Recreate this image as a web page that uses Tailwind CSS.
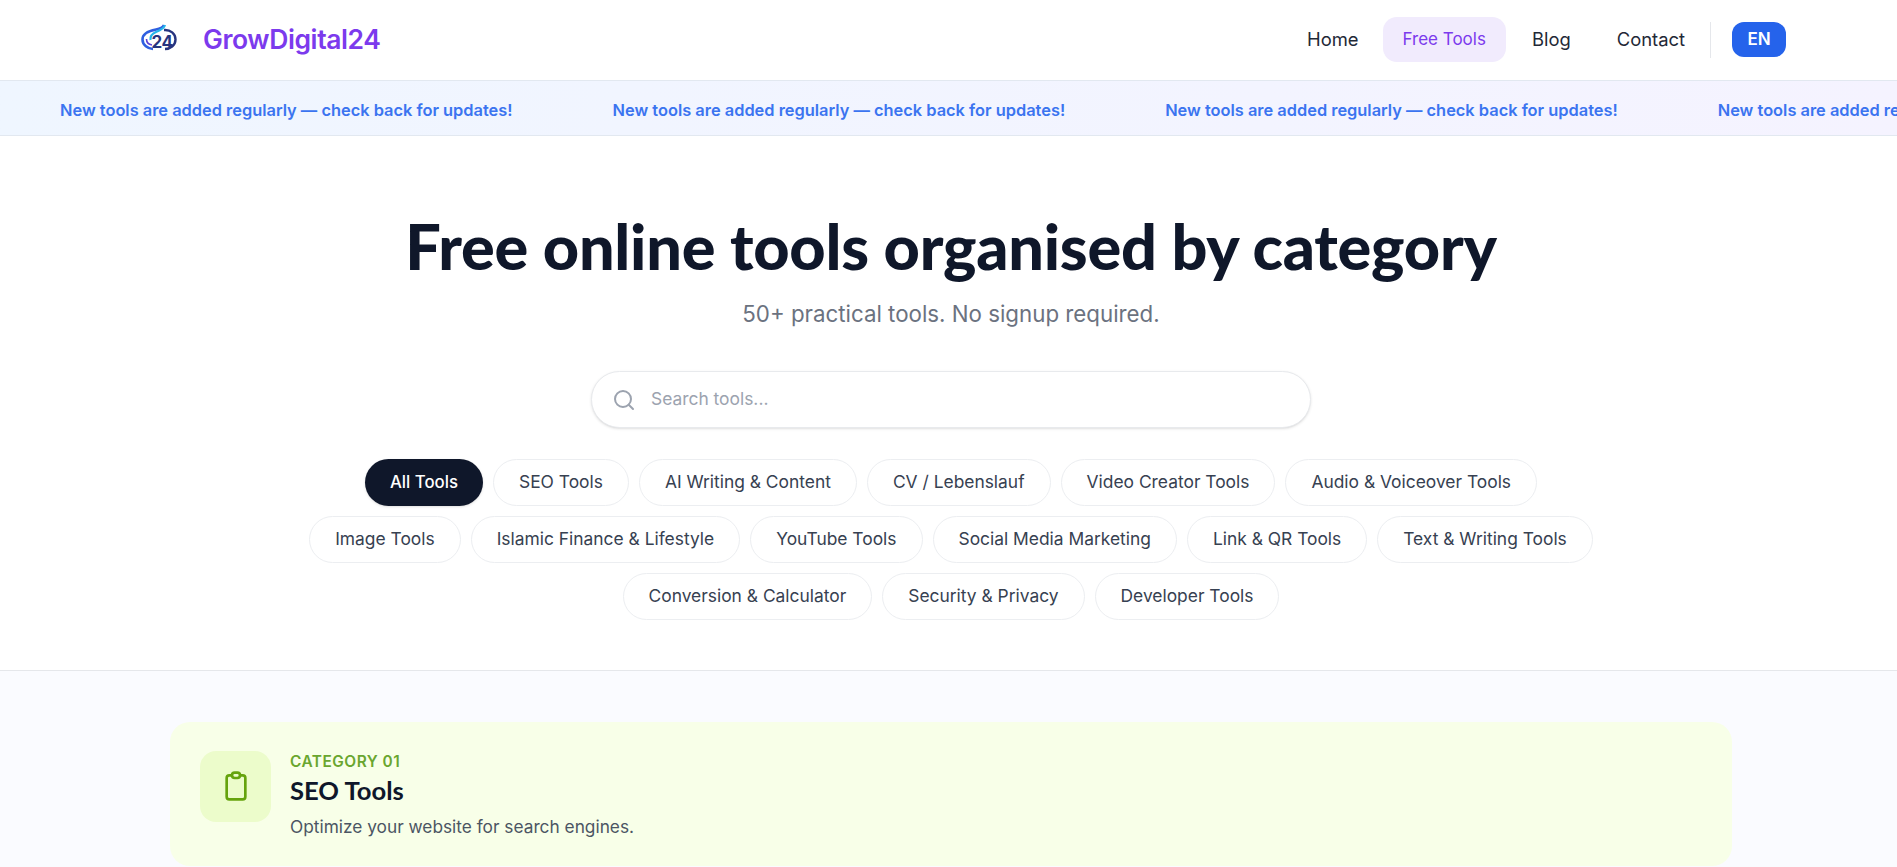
<!DOCTYPE html>
<html lang="en">
  <head>
    <meta charset="UTF-8" />
    <meta name="viewport" content="width=device-width, initial-scale=1.0" />
    <title>GrowDigital24 - Free Tools</title>
    <script src="https://cdn.jsdelivr.net/npm/@tailwindcss/browser@4"></script>
  </head>
  <body class="h-[867px] overflow-hidden bg-white font-['Inter',sans-serif] text-[#0f172a]">
    <!-- Header -->
    <header class="h-[80px] flex items-center justify-between pl-[141px] pr-[111px] bg-white">
      <a class="flex items-center gap-[26px]">
        <svg class="w-[36px] h-[28px] mb-[4px]" viewBox="0 0 36 28" fill="none">
          <path d="M23 1c-1 3-4 4-8 4.500C7 7 1.500 10 1.500 15.500S7 25 12 25" stroke="#2f5fe0" stroke-width="2.600" />
          <path d="M24 1c-1 4-5 5.500-9 7-3.500 1.500-6 4-5.500 8" stroke="#25b6ea" stroke-width="2.200" />
          <path d="M5.500 15c0 3 2 5.500 5.500 6" stroke="#5b3fd6" stroke-width="1.600" />
          <path d="M23 6c6.500-.5 11.500 3.500 11.500 9.500S29 25 24 25" stroke="#27347f" stroke-width="2.400" />
          <text x="10.500" y="24" font-size="17" font-weight="700" letter-spacing="-0.5" fill="#27347f" font-family="Inter, sans-serif">24</text>
        </svg>
        <span class="text-[26.500px] font-semibold tracking-[-0.4px] text-[#7c3aed]">GrowDigital24</span>
      </a>
      <nav class="flex items-center text-[18.400px] text-[#1f2937]">
        <a>Home</a>
        <a class="ml-[24px] mb-[2px] pt-[2px] px-[20px] h-[45px] flex items-center rounded-[14px] bg-[#f1ebfd] text-[17px] text-[#7c3aed]">Free Tools</a>
        <a class="ml-[26px]">Blog</a>
        <a class="ml-[46px]">Contact</a>
        <div class="w-px h-[36px] bg-[#e5e7eb] ml-[25px] mr-[21px]"></div>
        <button class="w-[54px] h-[35px] mb-[2px] pt-[2px] rounded-[12px] bg-[#2563eb] text-white font-semibold text-[17px]">EN</button>
      </nav>
    </header>

    <!-- Announcement strip -->
    <div class="h-[56px] flex items-center overflow-hidden whitespace-nowrap border-y border-[#e2e8f0] bg-gradient-to-r from-[#eff6ff] to-[#f5f3ff] pl-[60px] pt-[4px] gap-[100px] text-[16.400px] font-semibold text-[#3b74f0]">
      <span>New tools are added regularly — check back for updates!</span>
      <span>New tools are added regularly — check back for updates!</span>
      <span>New tools are added regularly — check back for updates!</span>
      <span class="shrink-0">New tools are added regularly — check back for updates!</span>
    </div>

    <!-- Hero -->
    <section class="h-[535px] border-b border-[#e5e7eb] flex flex-col items-center pl-[5px] pt-[74px]">
      <h1 class="text-[63px] leading-[72px] font-black tracking-[-0.25px] font-['Lato',sans-serif] text-[#0f172a]">Free online tools organised by category</h1>
      <p class="mt-[16px] text-[22.300px] leading-[32px] text-[#6b7280]">50+ practical tools. No signup required.</p>
      <div class="mt-[41px] w-[720px] h-[57px] flex items-center gap-[15px] pl-[20px] pr-[21px] rounded-full border border-[#e8eaed] bg-white shadow-sm">
        <svg class="w-[24px] h-[24px] text-[#9ca3af]" viewBox="0 0 24 24" fill="none" stroke="currentColor" stroke-width="2" stroke-linecap="round"><circle cx="11" cy="11" r="8" /><path d="m21 21-4.300-4.300" /></svg>
        <span class="text-[17.400px] text-[#9ca3af]">Search tools...</span>
      </div>
      <div class="mt-[31px] w-[1300px] flex flex-wrap justify-center gap-[10px] text-[17.400px] text-[#374151]">
        <a class="h-[47px] px-[25px] flex items-center rounded-full bg-[#0f172a] text-[16.800px] text-white font-medium shadow-sm">All Tools</a>
        <a class="h-[47px] px-[25px] flex items-center rounded-full border border-[#eceef1] bg-white">SEO Tools</a>
        <a class="h-[47px] px-[25px] flex items-center rounded-full border border-[#eceef1] bg-white">AI Writing &amp; Content</a>
        <a class="h-[47px] px-[25px] flex items-center rounded-full border border-[#eceef1] bg-white">CV / Lebenslauf</a>
        <a class="h-[47px] px-[25px] flex items-center rounded-full border border-[#eceef1] bg-white">Video Creator Tools</a>
        <a class="h-[47px] px-[25px] flex items-center rounded-full border border-[#eceef1] bg-white">Audio &amp; Voiceover Tools</a>
        <a class="h-[47px] px-[25px] flex items-center rounded-full border border-[#eceef1] bg-white">Image Tools</a>
        <a class="h-[47px] px-[25px] flex items-center rounded-full border border-[#eceef1] bg-white">Islamic Finance &amp; Lifestyle</a>
        <a class="h-[47px] px-[25px] flex items-center rounded-full border border-[#eceef1] bg-white">YouTube Tools</a>
        <a class="h-[47px] px-[25px] flex items-center rounded-full border border-[#eceef1] bg-white">Social Media Marketing</a>
        <a class="h-[47px] px-[25px] flex items-center rounded-full border border-[#eceef1] bg-white">Link &amp; QR Tools</a>
        <a class="h-[47px] px-[25px] flex items-center rounded-full border border-[#eceef1] bg-white">Text &amp; Writing Tools</a>
        <a class="h-[47px] px-[25px] flex items-center rounded-full border border-[#eceef1] bg-white">Conversion &amp; Calculator</a>
        <a class="h-[47px] px-[25px] flex items-center rounded-full border border-[#eceef1] bg-white">Security &amp; Privacy</a>
        <a class="h-[47px] px-[25px] flex items-center rounded-full border border-[#eceef1] bg-white">Developer Tools</a>
      </div>
    </section>

    <!-- Categories -->
    <main class="h-[196px] bg-[#fafbff] pl-[170px] pr-[165px] pt-[51px]">
      <div class="h-[144px] rounded-[20px] bg-[#f8ffe8] flex gap-[19px] pl-[30px] pt-[29px]">
        <div class="w-[71px] h-[71px] rounded-[16px] bg-[#ecfccb] flex items-center justify-center">
          <svg class="w-[32px] h-[32px] mb-[2px] text-[#65a30d]" viewBox="0 0 24 24" fill="none" stroke="currentColor" stroke-width="2" stroke-linecap="round" stroke-linejoin="round"><rect x="5" y="4" width="14" height="18" rx="2" /><rect x="9" y="2" width="6" height="4" rx="2" fill="#ecfccb" /></svg>
        </div>
        <div class="pt-[1px]">
          <div class="text-[15.400px] leading-[20px] font-semibold tracking-[0.5px] text-[#6aa62f]">CATEGORY 01</div>
          <h2 class="mt-[2px] text-[25.600px] leading-[32px] font-bold font-['Lato',sans-serif] text-[#0f172a]">SEO Tools</h2>
          <p class="mt-[9px] text-[17.300px] leading-[24px] text-[#4b5563]">Optimize your website for search engines.</p>
        </div>
      </div>
    </main>
  </body>
</html>
